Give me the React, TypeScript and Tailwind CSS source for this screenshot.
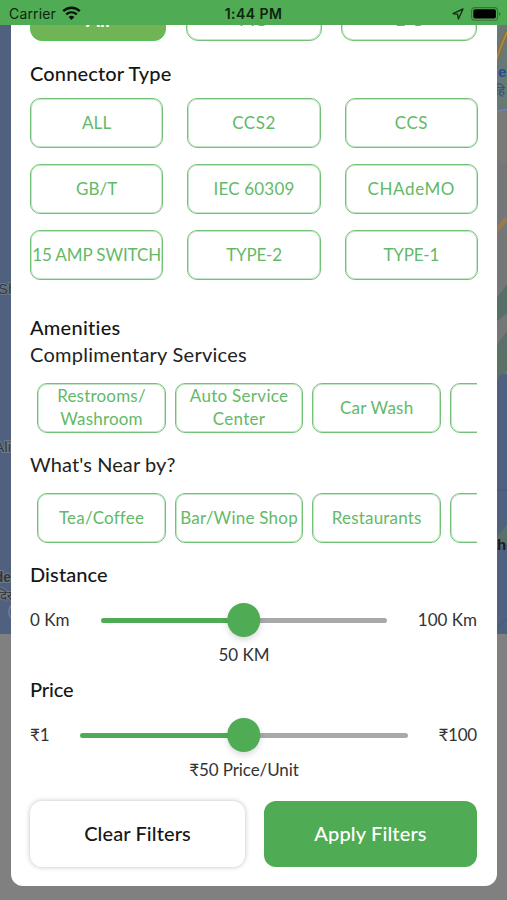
import type { ReactNode } from "react";

const connectors = [
  { label: "ALL", spacing: "tracking-[0.1px]" },
  { label: "CCS2", spacing: "tracking-[0.5px]" },
  { label: "CCS", spacing: "tracking-[0.4px]" },
  { label: "GB/T", spacing: "tracking-[0px]" },
  { label: "IEC 60309", spacing: "tracking-[0.2px]" },
  { label: "CHAdeMO", spacing: "tracking-[0.6px]" },
  { label: "15 AMP SWITCH", spacing: "tracking-[-0.1px]" },
  { label: "TYPE-2", spacing: "tracking-[-0.2px]" },
  { label: "TYPE-1", spacing: "tracking-[-0.2px]" },
];

const outline = "flex items-center justify-center border border-[#74c178] bg-white text-center text-[#63b968] whitespace-nowrap shadow-[inset_0_0_0_1px_rgba(111,191,115,0.4)]";

function Heading({ children, className }: { children: ReactNode; className: string }) {
  return (
    <h2 className={`h-[27px] text-[20px] leading-[27px] whitespace-nowrap ${className}`}>{children}</h2>
  );
}

function Chip({ children, spacing = "tracking-[0.2px]" }: { children: ReactNode; spacing?: string }) {
  return (
    <button className={`${outline} h-[50px] w-[128.6px] shrink-0 rounded-[10px] pb-[2px] text-[17px] leading-[23px] ${spacing}`}>
      {children}
    </button>
  );
}

function Slider({ className }: { className: string }) {
  return (
    <div className={`relative h-[34px] ${className}`}>
      <div className="flex h-full items-center pt-[1px]">
        <div className="h-[5px] flex-1 rounded-l-full bg-[#50ac54]" />
        <div className="h-[5px] flex-1 rounded-r-full bg-[#a9a9a9]" />
      </div>
      <div className="absolute top-0 left-1/2 -ml-[0.5px] size-[33.5px] -translate-x-1/2 rounded-full bg-[#50ac54] shadow-[0_3px_6px_rgba(0,0,0,0.15)]" />
    </div>
  );
}

function MapBackdrop() {
  return (
    <svg className="absolute inset-0" width="507" height="900" viewBox="0 0 507 900">
      <rect width="507" height="900" fill="#808080" />
      <rect y="25" width="254" height="609" fill="#4f617e" />
      <rect x="480" y="25" width="27" height="609" fill="#747678" />
      <path d="M480 25H507V111L480 112Z" fill="#687973" />
      <path d="M480 25H500L480 74Z" fill="#777b7c" />
      <path d="M480 112H507V165L480 154Z" fill="#7b7977" />
      <path d="M480 113L507 110" stroke="#7280a5" strokeWidth="2" />
      <path d="M507 32L500 49L493 70" stroke="#806f50" strokeWidth="5" fill="none" />
      <path d="M507 32L500 49L493 70" stroke="#b38b42" strokeWidth="1.6" fill="none" />
      <path d="M507 218L497 230L480 246" stroke="#a47d42" strokeWidth="4" fill="none" />
      <path d="M507 218L497 230L480 246" stroke="#7b7367" strokeWidth="1" fill="none" />
      <path d="M507 285L496 298V322L507 313Z" fill="#586f66" />
      <path d="M507 331L496 346V392L507 370Z" fill="#5b7066" />
      <path d="M480 374H507V634H480Z" fill="#4f617e" />
      <path d="M480 350H507V370Q499 374 497 382L480 380Z" fill="#5b7066" />
      <path d="M507 524L497 537V548L507 544Z" fill="#5b7066" />
      <path d="M497 490H507M507 618L497 628" stroke="#465675" strokeWidth="1" />
      <g fontFamily="'Liberation Sans', sans-serif" fontSize="15">
        <g stroke="#737983" strokeWidth="2" paintOrder="stroke">
          <text x="-2" y="294" fill="#30394a">Sh</text>
          <text x="11" y="452" fill="#30394a" textAnchor="end">Ali</text>
          <text x="11" y="582" fill="#30343c" textAnchor="end" fontWeight="bold" fontSize="14">de</text>
          <text x="-3" y="600" fill="#30343c" fontSize="13">दिर</text>
        </g>
        <text x="498" y="77" fill="#244e96" fontWeight="bold">e</text>
        <text x="495" y="95" fill="#244e96" fontSize="13">हि</text>
        <text x="497" y="550" fill="#171b23" fontWeight="bold">h</text>
      </g>
      <path d="M11 605Q7 612 11 618" stroke="#6c7790" strokeWidth="2" fill="none" />
    </svg>
  );
}

function StatusBar() {
  return (
    <header className="relative flex h-[25px] items-center bg-[#50ac54] px-[9px] pt-[2px] font-['Inter',sans-serif] text-[14px] leading-[22px] text-[#0d2410]">
      <div className="flex flex-1 items-center gap-[6px]">
        <span className="tracking-[0.15px]">Carrier</span>
        <svg className="mb-px" width="19" height="15" viewBox="0 0 19 15" fill="none" stroke="#061107">
          <path d="M1.2 5.2C6 .6 13 .6 17.8 5.2" strokeWidth="2.4" />
          <path d="M4.2 8.4C7.3 5.6 11.7 5.6 14.8 8.4" strokeWidth="2.3" />
          <path d="M9.5 14L6.6 11.1Q9.5 8.6 12.4 11.1Z" fill="#061107" stroke="none" />
        </svg>
      </div>
      <span className="text-[14px] font-semibold tracking-[0.45px]">1:44 PM</span>
      <div className="flex flex-1 items-center justify-end gap-[7px]">
        <svg width="12" height="12" viewBox="0 0 12 12" fill="none" stroke="#133116" strokeWidth="1.4" strokeLinejoin="round">
          <path d="M11 1L1 5.6L5.6 6.3L6.4 11Z" />
        </svg>
        <svg className="-mr-[3px]" width="30" height="14" viewBox="0 0 30 14">
          <rect x=".6" y=".6" width="26" height="12.6" rx="3.3" fill="none" stroke="#347438" strokeWidth="1.1" />
          <rect x="2.3" y="2.3" width="22.6" height="9.2" rx="1.8" fill="#000" />
          <path d="M28 4.7Q31 7 28 9.2Z" fill="#347438" />
        </svg>
      </div>
    </header>
  );
}

export default function App() {
  return (
    <div className="relative h-[900px] w-[507px] overflow-hidden font-['Lato','Noto_Sans',sans-serif] text-[#222]">
      <MapBackdrop />
      <StatusBar />
      <main className="relative ml-[11px] h-[861px] w-[486px] overflow-hidden rounded-b-[12px] bg-white pr-[19px] pl-[19px]">
        <div className="flex h-[16px] w-[447px] items-end justify-between overflow-hidden text-[20px] leading-[20px]">
          <div className="flex h-[50px] w-[136px] shrink-0 items-center justify-center rounded-[12px] border border-[#50c458] bg-[#70b456] pt-[5px] font-bold text-white">All</div>
          <div className={`${outline} h-[50px] w-[136px] rounded-[12px] pt-[3px]`}>AC</div>
          <div className={`${outline} h-[50px] w-[136px] rounded-[12px] pt-[3px]`}>DC</div>
        </div>

        <Heading className="mt-[19px] font-medium tracking-[0.15px] text-[#161616]">Connector Type</Heading>
        <div className="mt-[11px] grid w-[448px] grid-cols-3 gap-x-[24px] gap-y-[16px]">
          {connectors.map(({ label, spacing }) => (
            <button key={label} className={`${outline} h-[50px] rounded-[10px] pb-[1px] text-[17px] leading-[23px] ${spacing}`}>
              {label}
            </button>
          ))}
        </div>

        <Heading className="mt-[34px] font-medium tracking-[0.25px] text-[#161616]">Amenities</Heading>
        <Heading className="tracking-[0.25px]">Complimentary Services</Heading>
        <div className="mt-[15px] flex w-[447px] gap-[9px] overflow-hidden pl-[7.2px]">
          <Chip>Restrooms/<br />Washroom</Chip>
          <Chip spacing="tracking-[0.3px]">Auto Service<br />Center</Chip>
          <Chip>Car Wash</Chip>
          <Chip>{null}</Chip>
        </div>

        <Heading className="mt-[18px] tracking-[0.1px]">What's Near by?</Heading>
        <div className="mt-[15px] flex w-[447px] gap-[9px] overflow-hidden pl-[7.2px]">
          <Chip>Tea/Coffee</Chip>
          <Chip spacing="tracking-[0.25px]">Bar/Wine Shop</Chip>
          <Chip>Restaurants</Chip>
          <Chip>{null}</Chip>
        </div>

        <Heading className="mt-[18px] font-medium tracking-[0.1px] text-[#161616]">Distance</Heading>
        <div className="mt-[15px] flex h-[34px] w-[447px] items-center text-[17px] whitespace-nowrap text-[#333]">
          <span className="w-[71px]">0 Km</span>
          <Slider className="w-[286px]" />
          <span className="flex-1 text-right">100 Km</span>
        </div>
        <p className="mt-[6px] h-[24px] pr-[20px] text-center text-[17px] leading-[24px] text-[#333]">50 KM</p>

        <Heading className="mt-[9px] font-medium tracking-[-0.1px] text-[#161616]">Price</Heading>
        <div className="mt-[15px] flex h-[34px] w-[447px] items-center text-[17px] whitespace-nowrap text-[#333]">
          <span className="w-[50px]">₹1</span>
          <Slider className="w-[328px]" />
          <span className="flex-1 text-right tracking-[-0.2px]">₹100</span>
        </div>
        <p className="mt-[6px] h-[24px] pr-[20px] text-center text-[17px] leading-[24px] tracking-[-0.1px] text-[#333]">₹50 Price/Unit</p>

        <div className="mt-[19px] flex gap-[19px] text-[20px] font-medium">
          <button className="h-[66px] w-[215px] rounded-[12px] bg-white pb-[2px] tracking-[0.1px] text-[#161616] shadow-[0_0_5px_rgba(0,0,0,0.25)]">Clear Filters</button>
          <button className="h-[66px] w-[213px] rounded-[12px] bg-[#50ac54] pb-[2px] tracking-[0.15px] text-white">Apply Filters</button>
        </div>
      </main>
    </div>
  );
}
